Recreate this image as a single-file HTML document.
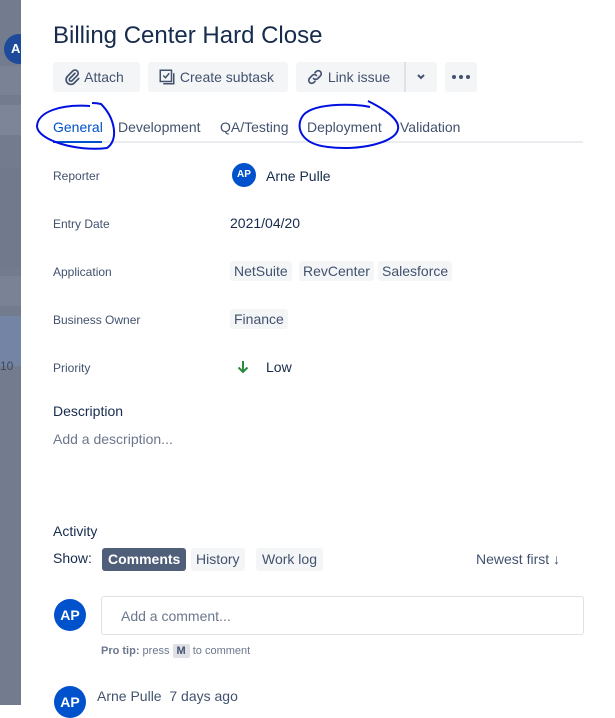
<!DOCTYPE html>
<html><head><meta charset="utf-8"><style>
*{box-sizing:border-box;margin:0;padding:0}
body{width:615px;height:705px;overflow:hidden;background:#fff;font-family:"Liberation Sans",sans-serif;color:#172b4d;position:relative}
.a{position:absolute;white-space:nowrap}
.strip{position:absolute;left:0;top:0;width:21px;height:705px;background:#737c8f}
.btn{position:absolute;top:62px;height:30px;background:#f4f5f7;border-radius:3px;font-size:14px;color:#42526e;line-height:30px}
.lbl{position:absolute;left:53px;font-size:12px;color:#42526e}
.tag{position:absolute;background:#f4f5f7;border-radius:3px;font-size:14px;color:#42526e;height:20px;line-height:20px;padding:0 4px}
.av{position:absolute;border-radius:50%;background:#0052cc;color:#fff;font-weight:bold;text-align:center}
</style></head><body>
<div class="strip"></div>
<div class="a" style="left:0;top:66px;width:21px;height:29px;background:#7a8396"></div>
<div class="a" style="left:0;top:105px;width:21px;height:30px;background:#7d8699"></div>
<div class="a" style="left:0;top:168px;width:21px;height:100px;background:#717a8d"></div>
<div class="a" style="left:0;top:276px;width:21px;height:30px;background:#7a8396"></div>
<div class="a" style="left:0;top:316px;width:21px;height:50px;background:#7384a4"></div>
<div class="a" style="left:0;top:359px;font-size:12px;color:#3e4a60">10</div>
<div class="av" style="left:4px;top:34px;width:30px;height:30px;font-size:13px;line-height:30px;text-align:left;padding-left:7px;background:#1e4a9c">A</div>
<div class="a" style="left:21px;top:0;width:594px;height:705px;background:#fff"></div>

<div class="a" style="left:53px;top:22px;font-size:24px;color:#172b4d">Billing Center Hard Close</div>

<div class="btn" style="left:53px;width:87px;padding-left:10px"><svg width="18" height="18" viewBox="0 0 24 24" style="vertical-align:-4px"><path d="M16 7l-7 7a2 2 0 003 3l7-7a4 4 0 00-6-6l-7 7a6 6 0 009 9l6-6" fill="none" stroke="#42526e" stroke-width="2.2" stroke-linecap="round"/></svg> Attach</div>
<div class="btn" style="left:148px;width:140px;padding-left:10px"><svg width="18" height="18" viewBox="0 0 24 24" style="vertical-align:-4px"><rect x="3" y="3" width="15" height="15" fill="none" stroke="#42526e" stroke-width="2"/><path d="M7 10l3 3 5-6M21 7v14H7" fill="none" stroke="#42526e" stroke-width="2"/></svg> Create subtask</div>
<div class="btn" style="left:296px;width:141px;padding-left:10px"><svg width="18" height="18" viewBox="0 0 24 24" style="vertical-align:-4px"><path d="M10 14a4 4 0 005.7 0l3.5-3.5a4 4 0 00-5.7-5.7L12 6.3M14 10a4 4 0 00-5.7 0l-3.5 3.5a4 4 0 005.7 5.7L12 17.7" fill="none" stroke="#42526e" stroke-width="2.2" stroke-linecap="round"/></svg> Link issue</div>
<div class="a" style="left:404px;top:62px;width:2px;height:30px;background:#dfe1e6"></div>
<svg class="a" style="left:415px;top:72px" width="12" height="10" viewBox="0 0 12 10"><path d="M3 3l3 3 3-3" fill="none" stroke="#42526e" stroke-width="2"/></svg>
<div class="btn" style="left:445px;width:32px"><svg width="32" height="30" viewBox="0 0 32 30"><circle cx="9" cy="15" r="2" fill="#42526e"/><circle cx="16" cy="15" r="2" fill="#42526e"/><circle cx="23" cy="15" r="2" fill="#42526e"/></svg></div>

<div class="a" style="left:53px;top:119px;font-size:14px;color:#0052cc">General</div>
<div class="a" style="left:118px;top:119px;font-size:14px;color:#42526e">Development</div>
<div class="a" style="left:220px;top:119px;font-size:14px;color:#42526e">QA/Testing</div>
<div class="a" style="left:307px;top:119px;font-size:14px;color:#42526e">Deployment</div>
<div class="a" style="left:400px;top:119px;font-size:14px;color:#42526e">Validation</div>
<div class="a" style="left:53px;top:141px;width:530px;height:2px;background:#ebecf0"></div>
<div class="a" style="left:53px;top:141px;width:49px;height:2px;background:#0052cc"></div>
<svg class="a" style="left:0;top:0" width="615" height="160"><path d="M90 106C60 104 38 112 37 126c0 14 40 26 70 22 12-8 8-30-6-44-4-1-8-1-9-1" fill="none" stroke="#0010e0" stroke-width="2"/><path d="M368 101c16 8 32 18 30 28-2 14-40 22-70 18-28-3-32-20-26-30 8-14 50-14 68-10" fill="none" stroke="#0010e0" stroke-width="2"/></svg>

<div class="lbl" style="top:169px">Reporter</div>
<div class="av" style="left:232px;top:163px;width:24px;height:24px;font-size:10px;line-height:24px">AP</div>
<div class="a" style="left:266px;top:168px;font-size:14px;color:#172b4d">Arne Pulle</div>
<div class="lbl" style="top:217px">Entry Date</div>
<div class="a" style="left:230px;top:215px;font-size:14px">2021/04/20</div>
<div class="lbl" style="top:265px">Application</div>
<div class="tag" style="left:230px;top:261px">NetSuite</div>
<div class="tag" style="left:299px;top:261px">RevCenter</div>
<div class="tag" style="left:378px;top:261px">Salesforce</div>
<div class="lbl" style="top:313px">Business Owner</div>
<div class="tag" style="left:230px;top:309px">Finance</div>
<div class="lbl" style="top:361px">Priority</div>
<svg class="a" style="left:237px;top:360px" width="12" height="14" viewBox="0 0 12 14"><path d="M6 1v11M1.5 7.5L6 12l4.5-4.5" fill="none" stroke="#2a8a3e" stroke-width="2"/></svg>
<div class="a" style="left:266px;top:359px;font-size:14px">Low</div>
<div class="a" style="left:53px;top:403px;font-size:14px;color:#172b4d">Description</div>
<div class="a" style="left:53px;top:431px;font-size:14px;color:#6b778c">Add a description...</div>

<div class="a" style="left:53px;top:523px;font-size:14px">Activity</div>
<div class="a" style="left:53px;top:550px;font-size:14px;color:#172b4d">Show:</div>
<div class="tag" style="left:102px;top:548px;height:23px;line-height:23px;padding:0 6px;background:#505f79;color:#fff;font-weight:bold">Comments</div>
<div class="tag" style="left:191px;top:548px;height:23px;line-height:23px;padding:0 5px">History</div>
<div class="tag" style="left:256px;top:548px;height:23px;line-height:23px;padding:0 6px">Work log</div>
<div class="a" style="left:476px;top:551px;font-size:14px;color:#42526e">Newest first ↓</div>

<div class="av" style="left:54px;top:599px;width:32px;height:32px;font-size:14px;line-height:32px">AP</div>
<div class="a" style="left:101px;top:596px;width:483px;height:39px;border:1px solid #dfe1e6;border-radius:3px"></div>
<div class="a" style="left:121px;top:608px;font-size:14px;color:#6b778c">Add a comment...</div>
<div class="a" style="left:101px;top:645px;font-size:11px;color:#6b778c"><b>Pro tip:</b> press <span style="background:#dfe1e6;padding:1px 4px;border-radius:2px;font-weight:bold;color:#42526e">M</span> to comment</div>

<div class="av" style="left:54px;top:686px;width:32px;height:32px;font-size:14px;line-height:32px">AP</div>
<div class="a" style="left:97px;top:688px;font-size:14px;color:#42526e">Arne Pulle&nbsp; 7 days ago</div>
</body></html>
